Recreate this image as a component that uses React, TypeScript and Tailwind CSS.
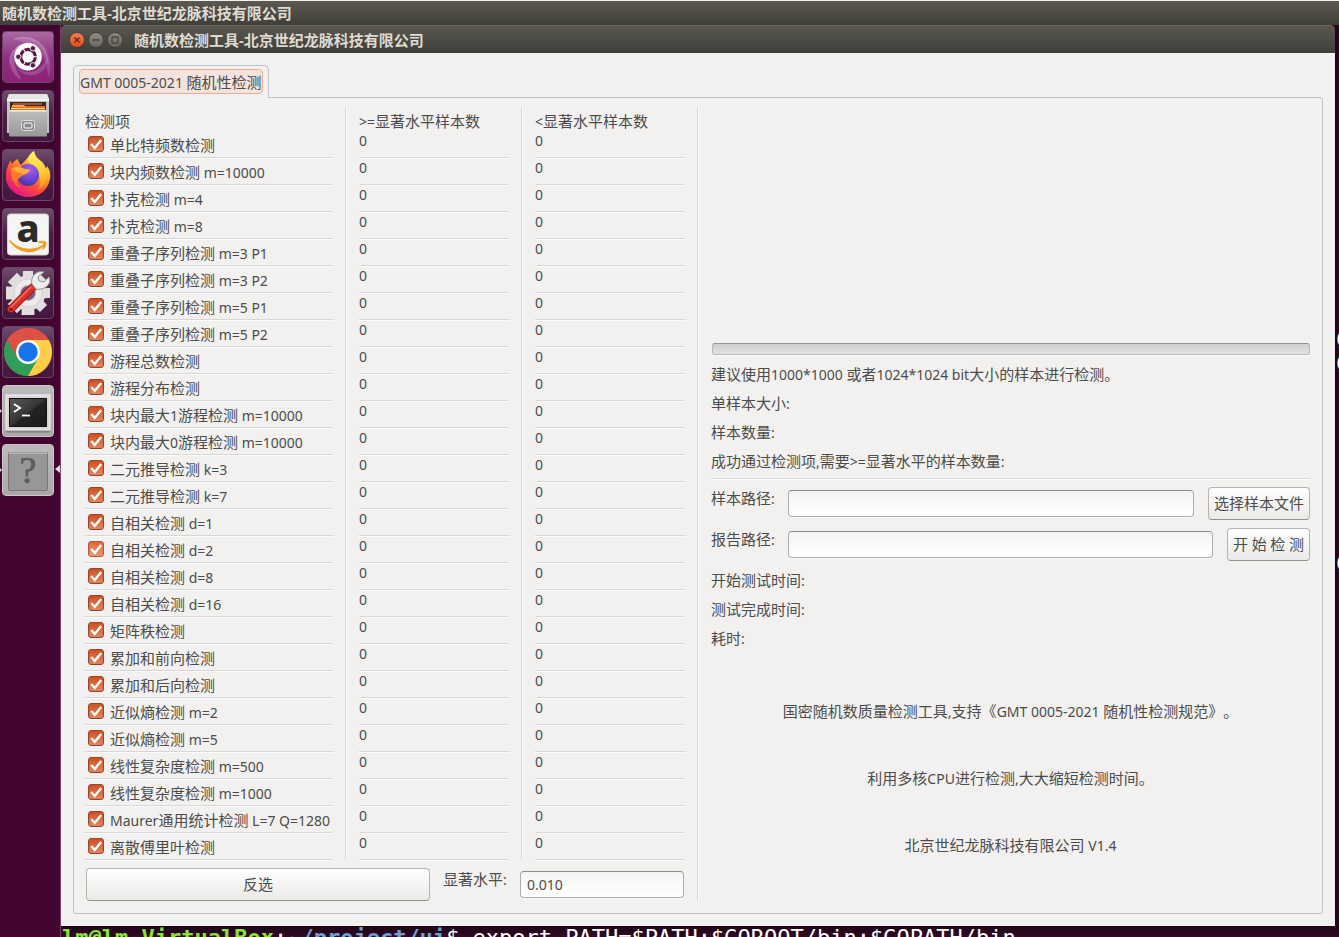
import React, { useState } from "react";

const TESTS = [
  "单比特频数检测",
  "块内频数检测 m=10000",
  "扑克检测 m=4",
  "扑克检测 m=8",
  "重叠子序列检测 m=3 P1",
  "重叠子序列检测 m=3 P2",
  "重叠子序列检测 m=5 P1",
  "重叠子序列检测 m=5 P2",
  "游程总数检测",
  "游程分布检测",
  "块内最大1游程检测 m=10000",
  "块内最大0游程检测 m=10000",
  "二元推导检测 k=3",
  "二元推导检测 k=7",
  "自相关检测 d=1",
  "自相关检测 d=2",
  "自相关检测 d=8",
  "自相关检测 d=16",
  "矩阵秩检测",
  "累加和前向检测",
  "累加和后向检测",
  "近似熵检测 m=2",
  "近似熵检测 m=5",
  "线性复杂度检测 m=500",
  "线性复杂度检测 m=1000",
  "Maurer通用统计检测 L=7 Q=1280",
  "离散傅里叶检测",
];

const TITLE = "随机数检测工具-北京世纪龙脉科技有限公司";

// Latin runs are set one step smaller than the Chinese text around them.
function Mixed({ text }: { text: string }) {
  return (
    <>
      {text.split(/([\x20-\x7e]+)/).map((part, i) =>
        i % 2 === 1 ? (
          <span key={i} className="text-[14px]">
            {part}
          </span>
        ) : (
          part
        ),
      )}
    </>
  );
}

function Tile({ children, light = false }: { children: React.ReactNode; light?: boolean }) {
  return (
    <span
      className={
        light
          ? "block size-13 rounded-[4px] border border-[#c9c5c8] bg-linear-to-b from-[#bdbabc] to-[#aaa6a9]"
          : "block size-13 rounded-[4px] border border-[#6a4766] bg-linear-to-b from-[#6f4c6b] via-[#4a1f45] to-[#451740]"
      }
    >
      {children}
    </span>
  );
}

function Art({ children }: { children: React.ReactNode }) {
  return (
    <svg viewBox="1 1 50 50" className="block size-full" aria-hidden="true">
      {children}
    </svg>
  );
}

function UbuntuIcon() {
  return (
    <Art>
      <defs>
        <linearGradient id="ub" x1="0" y1="0" x2="0" y2="1">
          <stop offset="0" stopColor="#ab6aa1" />
          <stop offset="0.5" stopColor="#8f3182" />
          <stop offset="1" stopColor="#8d2279" />
        </linearGradient>
      </defs>
      <rect x="1" y="1" width="50" height="50" rx="3" fill="url(#ub)" />
      <path d="M12 8C28 1 45 10 48 30c1 7 0 12-2 17 0-16-6-30-20-35z" fill="#fff" opacity="0.14" />
      <path d="M26 12C14 12 8 22 8 31c0 8 5 15 12 18C12 38 12 30 13 24z" fill="#fff" opacity="0.2" />
      <path d="M13 31c2 12 16 17 26 10 4-3 6-8 6-13-3 6-7 11-15 12-7 1-13-3-17-9z" fill="#fff" opacity="0.16" />
      <path d="M12 8C28 3 44 12 46 32M26 12C14 13 7 23 8 32" stroke="#eccbe7" strokeWidth="0.800" opacity="0.5" fill="none" />
      <circle cx="26" cy="26.800" r="14.300" fill="#50104a" opacity="0.3" />
      <circle cx="26" cy="25.800" r="13.800" fill="#fff" />
      <circle cx="26" cy="25.800" r="7.400" fill="none" stroke="#5c1750" strokeWidth="3.200" />
      <path d="M26 25.800h12M26 25.800l-6 10.400M26 25.800l-6-10.400" stroke="#fff" strokeWidth="1.100" />
      <g fill="#5c1750" stroke="#fff" strokeWidth="0.900">
        <circle cx="16.300" cy="25.800" r="2.700" />
        <circle cx="30.900" cy="17.300" r="2.700" />
        <circle cx="30.900" cy="34.300" r="2.700" />
      </g>
    </Art>
  );
}

function FilesIcon() {
  return (
    <Art>
      <defs>
        <linearGradient id="fa" x1="0" y1="0" x2="0" y2="1">
          <stop offset="0" stopColor="#bcbcba" />
          <stop offset="1" stopColor="#989896" />
        </linearGradient>
      </defs>
      <path d="M7 4h38l2 5v34H5V9z" fill="#c4c4c2" />
      <path d="M7 4h38l2 5H5z" fill="#e6e6e4" />
      <path d="M5 9h42v2H5z" fill="#f4f4f2" />
      <rect x="8" y="12" width="36" height="10" fill="#3b2a22" />
      <path d="M11 13h29v2H11z" fill="#a8502c" />
      <path d="M10 15h12l1 1h18v3H10z" fill="#f0a05a" />
      <path d="M9 17h14l1-1h19v6H9z" fill="#e2711e" />
      <path d="M9 18h34v1H9z" fill="#fbd3a0" />
      <path d="M8 20h36v1H8z" fill="#f8e9c8" />
      <rect x="7" y="21" width="38" height="25.500" rx="1" fill="url(#fa)" />
      <path d="M7 21.500h38" stroke="#dadad8" />
      <rect x="19.500" y="30.500" width="13" height="10" rx="2" fill="#8c8c8a" stroke="#dededc" />
      <rect x="22" y="33" width="8" height="5" rx="1" fill="#8a8a88" stroke="#fff" />
    </Art>
  );
}

function FirefoxIcon() {
  return (
    <Art>
      <defs>
        <linearGradient id="ff1" x1="0.8" y1="0.1" x2="0.25" y2="0.95">
          <stop offset="0" stopColor="#fff44f" />
          <stop offset="0.35" stopColor="#ffa02a" />
          <stop offset="0.65" stopColor="#ff4a3c" />
          <stop offset="1" stopColor="#e31587" />
        </linearGradient>
        <radialGradient id="ff2" cx="0.6" cy="0.25" r="0.8">
          <stop offset="0" stopColor="#a45cf0" />
          <stop offset="0.5" stopColor="#7248d8" />
          <stop offset="1" stopColor="#43309a" />
        </radialGradient>
        <linearGradient id="ff3" x1="0.6" y1="0" x2="0.6" y2="1">
          <stop offset="0" stopColor="#fff36a" />
          <stop offset="0.6" stopColor="#ffc430" />
          <stop offset="1" stopColor="#ff8a1e" />
        </linearGradient>
      </defs>
      <path
        d="M4 26c0-6 2-10 5-15 0 2 0 3 1 4 2-3 4-4 6-5 0 2 1 4 3 6l13-14c1 5 4 8 7 10 3 2 4 5 5 8l1-3c3 4 4 8 3 13-2 11-11 18-22 18S5 40 4 30z"
        fill="url(#ff1)"
      />
      <path d="M26 12c-1-4 3-8 6-10 0 5 4 8 7 11 5 5 6 10 5 17-1 6-4 9-8 11 4-7 2-14-1-19-2-4-6-6-9-10z" fill="url(#ff3)" />
      <circle cx="26" cy="26" r="11" fill="url(#ff2)" />
      <path d="M9 20c4-4 9-3 12-1 2 1 5 1 7 2-1 4-5 4-8 6-2 1-2 2-4 3-2 3 0 7 3 9C12 37 9 29 9 20z" fill="#ff7a2c" />
      <path d="M10 20c4-3 9-2 12 0l6 1c-1 3-4 3-7 5-2-3-7-2-11-6z" fill="#ffb03a" />
    </Art>
  );
}

function AmazonIcon() {
  return (
    <Art>
      <rect x="5.500" y="6" width="41" height="41" rx="3" fill="#f6f5f5" stroke="#d5d2d4" />
      <text x="26" y="34" textAnchor="middle" fontFamily="Noto Sans, sans-serif" fontWeight="800" fontSize="38" fill="#2b2a29">
        a
      </text>
      <path d="M8 33c9 10 25 11 34 4-10 10-25 8-34-4z" fill="#f79a1d" stroke="#f79a1d" strokeWidth="1.600" strokeLinejoin="round" />
      <path d="M36 34.500c3-2 7-1 8 0 0 3-1 5-3 7 0-2 1-4 1-6-2-1-4-1-6-1z" fill="#f79a1d" stroke="#f79a1d" />
    </Art>
  );
}

function SettingsIcon() {
  return (
    <Art>
      <g fill="#e0dfde">
        {[0, 45, 90, 135].map((a) => (
          <path key={a} d="M21 4h10l1.500 44h-13z" transform={`rotate(${a} 26 26)`} />
        ))}
        <circle cx="26" cy="26" r="17.500" />
      </g>
      <circle cx="26" cy="26" r="14" fill="#ecebea" stroke="#d5d3d2" />
      <circle cx="26" cy="26" r="7.500" fill="#7b5878" stroke="#b9b6b7" />
      <path d="M9 42 31 20" stroke="#8d1210" strokeWidth="8" strokeLinecap="round" />
      <path d="M9 42 31 20" stroke="#d8302a" strokeWidth="6.400" strokeLinecap="round" />
      <path d="M9 40 29 20" stroke="#ee6e62" strokeWidth="1.500" strokeLinecap="round" />
      <circle cx="9" cy="42.500" r="1.300" fill="#5d1210" />
      <path
        d="m30 17 4 5c3 1 9 0 12-4 2-2 2-5 1-8l-5 5-5-1-1-4 6-5c-4-1-8 0-10 3-2 2-3 6-2 9z"
        fill="#eeeded"
        stroke="#969394"
      />
    </Art>
  );
}

function ChromeIcon() {
  return (
    <Art>
      <circle cx="26" cy="26" r="24" fill="#dd5144" />
      <path d="M26 26 26 50A24 24 0 0 0 46.780 14H26z" fill="#ffcd46" />
      <path d="M5.220 14A24 24 0 0 0 26 50L36.400 32 26 26z" fill="#2f9e58" />
      <path d="M5.220 14A24 24 0 0 1 46.780 14H26L15.600 32z" fill="#dd5144" />
      <circle cx="26" cy="26" r="12" fill="#fff" />
      <circle cx="26" cy="26" r="9.700" fill="#1a73e8" />
    </Art>
  );
}

function TerminalIcon() {
  return (
    <Art>
      <defs>
        <linearGradient id="te" x1="0" y1="0" x2="1" y2="1">
          <stop offset="0" stopColor="#5a5a58" />
          <stop offset="0.5" stopColor="#343432" />
          <stop offset="0.52" stopColor="#232321" />
          <stop offset="1" stopColor="#1a1a18" />
        </linearGradient>
      </defs>
      <path d="M4 44h44v3.500H4z" fill="#858384" />
      <rect x="4" y="10" width="44" height="35" fill="#d9d8d7" stroke="#f5f4f4" />
      <rect x="7.500" y="13.500" width="37" height="28" fill="url(#te)" stroke="#111" />
      <path d="m12 19 6 4-6 4" stroke="#fff" strokeWidth="2" fill="none" />
      <path d="M20 30.500h8" stroke="#fff" strokeWidth="1.800" />
    </Art>
  );
}

function UnknownIcon() {
  return (
    <Art>
      <rect x="6.500" y="8.500" width="39" height="38" rx="1" fill="#989797" stroke="#777576" />
      <path d="M7 9h38" stroke="#cfcdce" />
      <text x="26" y="39" textAnchor="middle" fontFamily="Liberation Serif, serif" fontSize="38" fill="#5e5c5d" stroke="#5e5c5d" strokeWidth="0.700">
        ?
      </text>
    </Art>
  );
}

const LAUNCHER = [
  { name: "Ubuntu", icon: <UbuntuIcon />, light: false },
  { name: "Files", icon: <FilesIcon />, light: false },
  { name: "Firefox", icon: <FirefoxIcon />, light: false },
  { name: "Amazon", icon: <AmazonIcon />, light: false },
  { name: "Settings", icon: <SettingsIcon />, light: false },
  { name: "Chrome", icon: <ChromeIcon />, light: false },
  { name: "Terminal", icon: <TerminalIcon />, light: true },
  { name: "Unknown", icon: <UnknownIcon />, light: true },
];

function Launcher() {
  return (
    <nav className="flex w-[61px] shrink-0 flex-col gap-[7px] border-r border-[#7d3f76] bg-[#41052f] pt-[6px] pl-[2px]">
      {LAUNCHER.map((item, i) => (
        <button key={item.name} type="button" aria-label={item.name} className="relative block w-13">
          <Tile light={item.light}>{item.icon}</Tile>
          {i >= 6 && (
            <svg viewBox="0 0 2 4" className="absolute top-6 -left-[2px] h-1 w-[2px]" aria-hidden="true">
              <path d="M0 0 2 2 0 4z" fill="#d8cdd6" />
            </svg>
          )}
          {i === 7 && (
            <svg viewBox="0 0 5 8" className="absolute top-[21px] -right-[6px] h-2 w-[5px]" aria-hidden="true">
              <path d="M5 0 0 4 5 8z" fill="#e2dbe1" />
            </svg>
          )}
        </button>
      ))}
    </nav>
  );
}

function WindowButton({ kind }: { kind: "close" | "min" | "max" }) {
  const close = kind === "close";
  const ink = close ? "#5a2412" : "#3a3935";
  return (
    <button type="button" aria-label={kind} className="size-4">
      <svg viewBox="0 0 16 16" className="block size-4" aria-hidden="true">
        <defs>
          <linearGradient id={"wb" + kind} x1="0" y1="0" x2="0" y2="1">
            <stop offset="0" stopColor={close ? "#f4805a" : "#8d8b82"} />
            <stop offset="1" stopColor={close ? "#dc4a1c" : "#67655e"} />
          </linearGradient>
        </defs>
        <circle cx="8" cy="8" r="7.500" fill={"url(#wb" + kind + ")"} stroke="#38372f" strokeWidth="0.800" />
        {kind === "close" && <path d="m5.500 5.500 5 5m0-5-5 5" stroke={ink} strokeWidth="1.200" />}
        {kind === "min" && <path d="M4.500 8h7" stroke={ink} strokeWidth="1.200" />}
        {kind === "max" && <rect x="5" y="5" width="6" height="6" fill="none" stroke={ink} strokeWidth="1.100" />}
      </svg>
    </button>
  );
}

function Check({
  id,
  checked,
  hot,
  onChange,
}: {
  id: string;
  checked: boolean;
  hot: boolean;
  onChange: () => void;
}) {
  return (
    <span className="relative mt-[5px] block size-4 shrink-0">
      <input
        id={id}
        type="checkbox"
        checked={checked}
        onChange={onChange}
        className={
          hot
            ? "block size-4 appearance-none rounded-[3px] border border-[#a85a3e] bg-white checked:bg-linear-to-b checked:from-[#e4683a] checked:to-[#ea9674]"
            : "block size-4 appearance-none rounded-[3px] border border-[#94452a] bg-white checked:bg-linear-to-b checked:from-[#cf4f20] checked:to-[#e2835c]"
        }
      />
      {checked && (
        <svg viewBox="0 0 16 16" className="pointer-events-none absolute inset-0 size-4" aria-hidden="true">
          <path d="m3.200 8 3.600 4L13.200 4" stroke="#fff" strokeWidth="2.400" fill="none" />
        </svg>
      )}
    </span>
  );
}

const LINE = "border-b border-[#d8d7d5] shadow-[0_1px_0_#fbfbfa]";
const SPLIT = "border-l border-[#d8d7d5] pl-[13px] pr-3 shadow-[inset_1px_0_0_#fbfbfa]";
const BUTTON =
  "h-[33px] rounded-[4px] border border-[#b4b3b0] border-b-[#93928f] bg-linear-to-b from-white to-[#ebeae8] text-center leading-[31px]";
const FIELD =
  "h-[27px] min-w-0 rounded-[4px] border border-[#adaca9] border-t-[#8d8c89] bg-linear-to-b from-[#f4f4f4] to-white px-[6px] text-[14px] shadow-[0_1px_0_#fafafa] outline-none";

function Results() {
  const [on, setOn] = useState<boolean[]>(TESTS.map(() => true));
  const toggle = (i: number) => setOn(on.map((v, j) => (j === i ? !v : v)));

  return (
    <section className="flex shrink-0 flex-col">
      <table className="border-separate border-spacing-0 text-left">
        <thead>
          <tr className="h-6">
            <th className="p-0 pt-1 pr-3 leading-[19px] font-normal">检测项</th>
            <th className={`${SPLIT} pt-1 leading-[19px] font-normal`}>
              <Mixed text=">=显著水平样本数" />
            </th>
            <th className={`${SPLIT} pt-1 leading-[19px] font-normal`}>
              <Mixed text="<显著水平样本数" />
            </th>
          </tr>
        </thead>
        <tbody>
          {TESTS.map((name, i) => (
            <tr key={name}>
              <td className="p-0 pr-3">
                <div className={`flex h-[27px] w-[248px] pl-[3px] ${LINE}`}>
                  <Check id={`t${i}`} checked={on[i]} hot={i === 15} onChange={() => toggle(i)} />
                  <label htmlFor={`t${i}`} className="pl-[6px] leading-[28px] whitespace-nowrap">
                    <Mixed text={name} />
                  </label>
                </div>
              </td>
              <td className={SPLIT}>
                <div className={`h-[27px] w-[150px] text-[14px] leading-[20px] ${LINE}`}>0</div>
              </td>
              <td className={SPLIT}>
                <div className={`h-[27px] w-[150px] text-[14px] leading-[20px] ${LINE}`}>0</div>
              </td>
            </tr>
          ))}
        </tbody>
      </table>
      <div className="mt-2 flex items-start pr-[13px] pl-px">
        <button type="button" className={`${BUTTON} flex-1`} onClick={() => setOn(on.map((v) => !v))}>
          反选
        </button>
        <label htmlFor="level" className="w-[90px] pl-[13px] leading-[22px]">
          <Mixed text="显著水平:" />
        </label>
        <input id="level" defaultValue="0.010" className={`${FIELD} mt-[3px] w-[164px]`} />
      </div>
    </section>
  );
}

function PathRow({ id, label, action }: { id: string; label: string; action: string }) {
  return (
    <div className="mt-2 flex items-start">
      <label htmlFor={id} className="w-[77px] leading-[22px]">
        <Mixed text={label} />
      </label>
      <input id={id} className={`${FIELD} mt-[3px] flex-1`} />
      <button type="button" className={`${BUTTON} ml-[14px] px-[5px]`}>
        <Mixed text={action} />
      </button>
    </div>
  );
}

function Info({ text }: { text: string }) {
  return (
    <p className="leading-[29px]">
      <Mixed text={text} />
    </p>
  );
}

function Details() {
  return (
    <section className="flex min-w-0 flex-1 flex-col border-l border-[#d8d7d5] pr-3 pl-[13px] shadow-[inset_1px_0_0_#fbfbfa]">
      <div className="flex-1" />
      <div
        role="progressbar"
        aria-valuenow={0}
        aria-label="进度"
        className="mb-[5px] ml-px h-3 rounded-[3px] border border-[#b9b8b6] border-t-[#949391] bg-linear-to-b from-[#cfcfcf] to-[#e3e3e3] shadow-[0_1px_0_#fafafa]"
      />
      <Info text="建议使用1000*1000 或者1024*1024 bit大小的样本进行检测。" />
      <Info text="单样本大小:" />
      <Info text="样本数量:" />
      <Info text="成功通过检测项,需要>=显著水平的样本数量:" />
      <hr className={`mt-[2px] border-t-0 ${LINE}`} />
      <PathRow id="sample" label="样本路径:" action="选择样本文件" />
      <PathRow id="report" label="报告路径:" action="开 始 检 测" />
      <div className="mt-[5px]">
        <Info text="开始测试时间:" />
        <Info text="测试完成时间:" />
        <Info text="耗时:" />
      </div>
      <div className="mt-[25px] mb-[22px] text-center leading-[67px] [text-spacing-trim:space-all]">
        <p>
          <Mixed text="国密随机数质量检测工具,支持《GMT 0005-2021 随机性检测规范》。" />
        </p>
        <p>
          <Mixed text="利用多核CPU进行检测,大大缩短检测时间。" />
        </p>
        <p>
          <Mixed text="北京世纪龙脉科技有限公司 V1.4" />
        </p>
      </div>
    </section>
  );
}

export default function App() {
  return (
    <div className="flex h-screen flex-col overflow-hidden bg-[#300a24] font-['Noto_Sans','Noto_Sans_CJK_SC',sans-serif] text-[15px] text-[#4c4c4c]">
      <header className="h-[25px] shrink-0 border-t border-[#f2f1ef] bg-linear-to-b from-[#5c594f] to-[#403f3a] pl-[2px] leading-6 font-bold text-[#dfdbd2]">
        {TITLE}
      </header>
      <div className="flex min-h-0 flex-1">
        <Launcher />
        <div className="flex min-w-0 flex-1 flex-col">
          <div className="flex shrink-0">
            <main className="min-w-0 flex-1">
              <div className="flex h-7 items-center gap-[3px] rounded-t-[5px] border-t border-[#6b695f] bg-linear-to-b from-[#595750] to-[#3f3e39] pl-2 font-bold text-[#dfdbd2]">
                <WindowButton kind="close" />
                <WindowButton kind="min" />
                <WindowButton kind="max" />
                <h1 className="pl-2 leading-7">{TITLE}</h1>
              </div>
              <div className="bg-[#f2f1ef] px-3 pt-3 pb-3">
                <div role="tablist" className="relative z-10 -mb-px flex">
                  <button
                    type="button"
                    role="tab"
                    aria-selected="true"
                    className="flex h-[33px] items-start rounded-t-[5px] border border-b-0 border-[#c3c2c0] bg-[#f2f1ef] px-[5px] pt-[3px]"
                  >
                    <span className="block h-[25px] rounded-[4px] border border-[#f0ab93] bg-[#f3e3dd] leading-[25px] whitespace-nowrap">
                      <Mixed text="GMT 0005-2021 随机性检测" />
                    </span>
                  </button>
                </div>
                <div role="tabpanel" className="flex rounded-b-[3px] rounded-tr-[3px] border border-[#c3c2c0] pt-[9px] pb-3 pl-[11px]">
                  <Results />
                  <Details />
                </div>
              </div>
            </main>
            <div
              aria-hidden="true"
              className="w-1 shrink-0 overflow-hidden bg-linear-to-r from-[#1a0513] to-[#300a24] pt-[303px] pl-px font-['DejaVu_Sans_Mono',monospace] text-[22px] leading-6 text-white"
            >
              <p>C</p>
              <p>C</p>
              <p className="pt-44">C</p>
            </div>
          </div>
          <p className="min-h-0 flex-1 overflow-hidden bg-linear-to-b from-[#1f0518] to-[#300a24] pl-px font-['DejaVu_Sans_Mono',monospace] text-[22px] leading-6 whitespace-nowrap text-white">
            <span className="font-bold text-[#8ae234]">lm@lm-VirtualBox</span>:
            <span className="font-bold text-[#729fcf]">~/project/ui</span>$ export PATH=$PATH:$GOROOT/bin:$GOPATH/bin
          </p>
        </div>
      </div>
    </div>
  );
}
